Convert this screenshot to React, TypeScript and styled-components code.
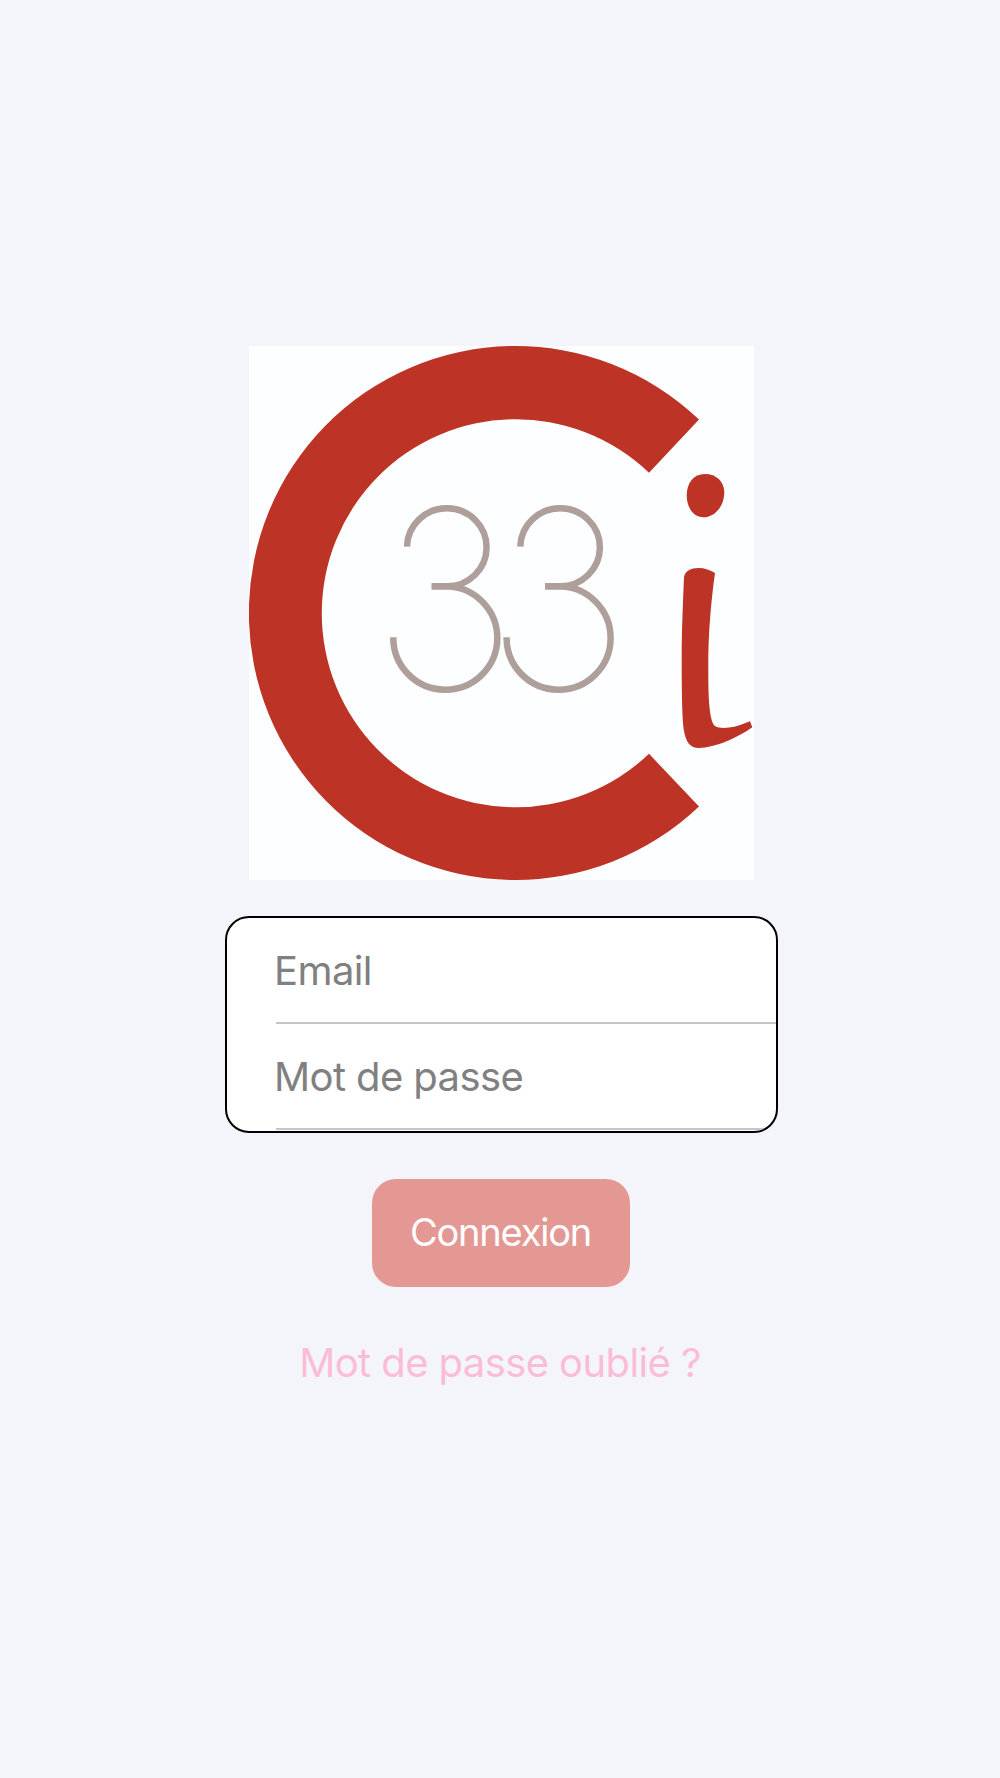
import { createGlobalStyle, styled } from 'styled-components'

const GlobalStyle = createGlobalStyle`
  html, body {
    margin: 0;
    padding: 0;
    background-color: #f4f5fa;
  }
`

const Page = styled.main`
  box-sizing: border-box;
  display: flex;
  flex-direction: column;
  align-items: center;
  width: 1000px;
  height: 1778px;
  padding: 346px 0 0 3px;
  font-family: Inter, 'Liberation Sans', sans-serif;
  background-color: #f4f5fa;
`

const LogoSvg = styled.svg`
  display: block;
  width: 505px;
  height: 534px;
  background-color: #fdfeff;
`

const Form = styled.form`
  display: flex;
  flex-direction: column;
  align-items: center;
`

const FieldCard = styled.div`
  box-sizing: border-box;
  width: 553px;
  height: 217px;
  margin-top: 36px;
  padding: 0 0 0 49px;
  overflow: hidden;
  background-color: #fff;
  border: 2px solid #000;
  border-radius: 24px;
`

const FieldInput = styled.input`
  box-sizing: border-box;
  display: block;
  width: 100%;
  height: 106px;
  padding: 0;
  font-family: inherit;
  font-size: 40px;
  letter-spacing: -0.6px;
  text-indent: -2px;
  color: #333;
  background: transparent;
  border: 0;
  border-bottom: 2px solid #c6c6c8;
  border-radius: 0;
  outline: none;

  &::placeholder {
    color: #808080;
    opacity: 1;
  }
`

const SubmitButton = styled.button`
  width: 258px;
  height: 108px;
  margin: 46px 2px 0 0;
  padding: 0 0 3px;
  font-family: inherit;
  font-size: 38px;
  letter-spacing: -1.2px;
  color: #fff;
  background-color: #e49893;
  border: 0;
  border-radius: 24px;
`

const ForgotLink = styled.a`
  margin: 53px 3px 0 0;
  font-size: 40px;
  letter-spacing: -0.6px;
  line-height: 46px;
  color: #fbbdd5;
  text-decoration: none;
`

const Three = ({ dx = 0 }: { dx?: number }) => (
  <g
    transform={`translate(${dx} 0)`}
    fill="none"
    stroke="#ae9f9b"
    strokeWidth="6.5"
  >
    <path d="M158 200.6 A39.8 39 0 1 1 197.8 240.3 H182.7" />
    <path d="M182.7 240.3 H196.3 A52 51.7 0 1 1 144.3 291.3" />
  </g>
)

const Logo = () => (
  <LogoSvg viewBox="0 0 505 534" role="img" aria-label="C33i">
    <path
      fill="#bd3326"
      d="M450 73.5 A266.5 267 0 1 0 450 460.5 L400 407.8 A193.7 194 0 1 1 400 126.7 Z"
    />
    <Three />
    <Three dx={113.3} />
    <path
      fill="#bd3326"
      d="M456 128 C467 128 475.3 135.5 475.3 146.3 C475.3 160 466 171.3 454.3 171.3 C444 171.3 437.7 161 437.7 149.6 C437.7 137 444.5 128 456 128 Z"
    />
    <path
      fill="#bd3326"
      d="M435 231 C436 225 442 222 449.3 222 C456 222 461 224 466 227 C462 255 459 290 459.3 321 C459.3 345 459.5 375 466 380 C470 382.5 476 382 480 381.5 C487 381 494 378 501 375.3 L503.3 381.3 C490 391 466 402 450 402 C441 402 437 396 435 385 C433 372 432.7 345 432.7 310 C432.7 285 434 255 435 231 Z"
    />
  </LogoSvg>
)

export default function App() {
  return (
    <>
      <GlobalStyle />
      <Page>
        <Logo />
        <Form onSubmit={(e) => e.preventDefault()}>
          <FieldCard>
            <FieldInput type="email" placeholder="Email" />
            <FieldInput type="password" placeholder="Mot de passe" />
          </FieldCard>
          <SubmitButton type="submit">Connexion</SubmitButton>
          <ForgotLink href="#">Mot de passe oublié ?</ForgotLink>
        </Form>
      </Page>
    </>
  )
}
